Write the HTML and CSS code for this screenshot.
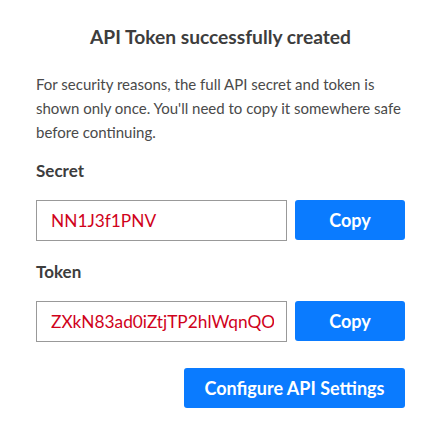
FILE: index.html
```html
<!DOCTYPE html>
<html lang="en">
<head>
    <meta charset="UTF-8">
    <meta name="viewport" content="width=device-width, initial-scale=1.0">
    <title>API Token</title>
    <link rel="stylesheet" href="styles.css">
</head>
<body>
    <div class="modal">
        <h1 class="title">API Token successfully created</h1>
        <p class="notice">For security reasons, the full API secret and token is shown only once. You'll need to copy it somewhere safe before continuing.</p>

        <label class="field-label" for="secret">Secret</label>
        <div class="field-row">
            <input type="text" id="secret" class="field-input" value="NN1J3f1PNV" readonly>
            <button type="button" class="btn btn-copy">Copy</button>
        </div>

        <label class="field-label" for="token">Token</label>
        <div class="field-row">
            <input type="text" id="token" class="field-input" value="ZXkN83ad0iZtjTP2hlWqnQOx7vLm" readonly>
            <button type="button" class="btn btn-copy">Copy</button>
        </div>

        <div class="actions">
            <button type="button" class="btn btn-configure">Configure API Settings</button>
        </div>
    </div>
</body>
</html>
```

FILE: styles.css
```css
body {
    margin: 0;
    font-family: Lato, "Open Sans", sans-serif;
    background: #fff;
    color: #444;
}
.modal {
    padding: 25px 34px 20px 36px;
}
.title {
    margin: 0 0 24px;
    text-align: center;
    font-size: 19.2px;
    font-weight: 700;
    color: #3d3d3d;
}
.notice {
    margin: 0 0 16px;
    font-size: 15px;
    line-height: 24px;
    color: #4a4a4a;
}
.field-label {
    display: block;
    margin-bottom: 19px;
    font-size: 17px;
    font-weight: 700;
    color: #3d3d3d;
}
.field-row {
    display: flex;
    gap: 8px;
    margin-bottom: 20px;
}
.field-input {
    box-sizing: border-box;
    width: 251px;
    height: 41px;
    padding: 0 12px 0 14px;
    border: 1px solid #999;
    font-family: Lato, sans-serif;
    font-size: 17.3px;
    color: #d0021b;
    outline: none;
}
.btn {
    border: none;
    border-radius: 3px;
    background: #0a7bff;
    color: #fff;
    font-family: Lato, sans-serif;
    font-weight: 700;
    font-size: 18px;
    cursor: pointer;
}
.btn-copy {
    width: 110px;
    height: 40px;
}
.actions {
    display: flex;
    justify-content: flex-end;
    margin-top: 26px;
}
.btn-configure {
    width: 221px;
    height: 40px;
}
```
